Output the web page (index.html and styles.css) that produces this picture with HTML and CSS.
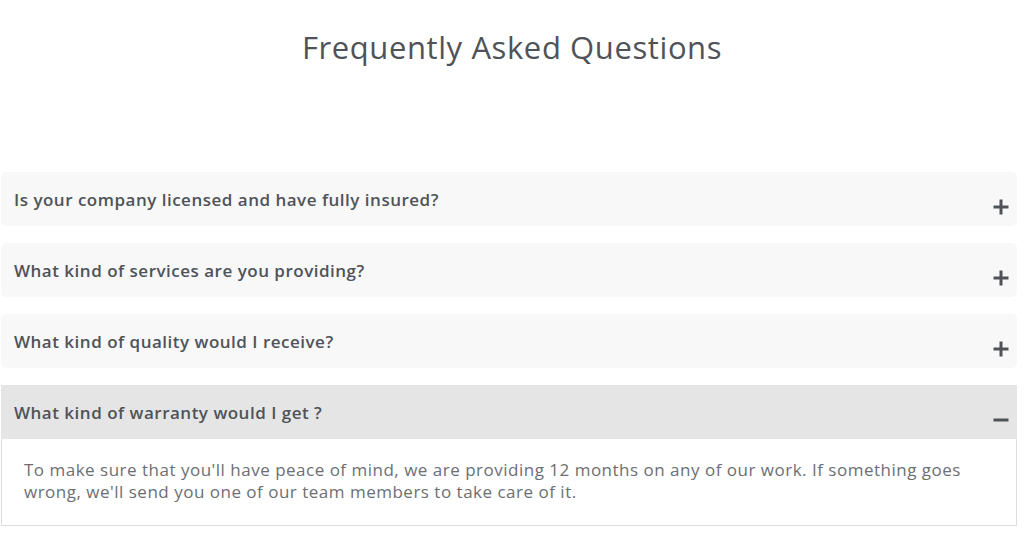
FILE: index.html
```html
<!DOCTYPE html>
<html lang="en">
<head>
<meta charset="utf-8">
<title>FAQ</title>
<link rel="stylesheet" href="styles.css">
</head>
<body>
<section class="faq">
  <h1 class="faq-title">Frequently Asked Questions</h1>
  <div class="faq-list">
    <div class="faq-item">
      <div class="faq-q">
        <span class="faq-q-text">Is your company licensed and have fully insured?</span>
        <span class="faq-icon"><svg width="16" height="16" viewBox="0 0 16 16"><path d="M8 0.5v15M0.5 8h15" stroke="#4f5358" stroke-width="3" fill="none"/></svg></span>
      </div>
    </div>
    <div class="faq-item">
      <div class="faq-q">
        <span class="faq-q-text">What kind of services are you providing?</span>
        <span class="faq-icon"><svg width="16" height="16" viewBox="0 0 16 16"><path d="M8 0.5v15M0.5 8h15" stroke="#4f5358" stroke-width="3" fill="none"/></svg></span>
      </div>
    </div>
    <div class="faq-item">
      <div class="faq-q">
        <span class="faq-q-text">What kind of quality would I receive?</span>
        <span class="faq-icon"><svg width="16" height="16" viewBox="0 0 16 16"><path d="M8 0.5v15M0.5 8h15" stroke="#4f5358" stroke-width="3" fill="none"/></svg></span>
      </div>
    </div>
    <div class="faq-item open">
      <div class="faq-q">
        <span class="faq-q-text">What kind of warranty would I get ?</span>
        <span class="faq-icon"><svg width="16" height="16" viewBox="0 0 16 16"><path d="M0.5 8h15" stroke="#4f5358" stroke-width="3" fill="none"/></svg></span>
      </div>
      <div class="faq-a">
        To make sure that you'll have peace of mind, we are providing 12 months on any of our work. If something goes wrong, we'll send you one of our team members to take care of it.
      </div>
    </div>
  </div>
</section>
</body>
</html>
```

FILE: styles.css
```css
* { box-sizing: border-box; }

body {
  margin: 0;
  background: #ffffff;
  font-family: "Open Sans", "Lato", sans-serif;
  color: #4f5358;
}

.faq-title {
  margin: 28px 0 0;
  text-align: center;
  font-size: 31px;
  font-weight: 400;
  line-height: 38px;
  letter-spacing: 0.6px;
  color: #4f5358;
}

.faq-list {
  margin-top: 106px;
  padding: 0 7px 0 1px;
  display: flex;
  flex-direction: column;
  gap: 17px;
}

.faq-q {
  height: 54px;
  padding: 0 8px 0 13px;
  display: flex;
  align-items: center;
  justify-content: space-between;
  background: #f8f8f8;
  border-radius: 5px;
}

.faq-q-text {
  font-size: 17px;
  font-weight: 600;
  letter-spacing: 0.5px;
  color: #4f5358;
}

.faq-icon {
  display: flex;
  margin-top: 15px;
}

.faq-item.open .faq-q {
  background: #e5e5e5;
  border-radius: 0;
}

.faq-a {
  border: 1px solid #dddddd;
  border-top: none;
  padding: 20px 23px 22px 22px;
  font-size: 17px;
  line-height: 22px;
  letter-spacing: 0.5px;
  color: #6b6f74;
}
```
